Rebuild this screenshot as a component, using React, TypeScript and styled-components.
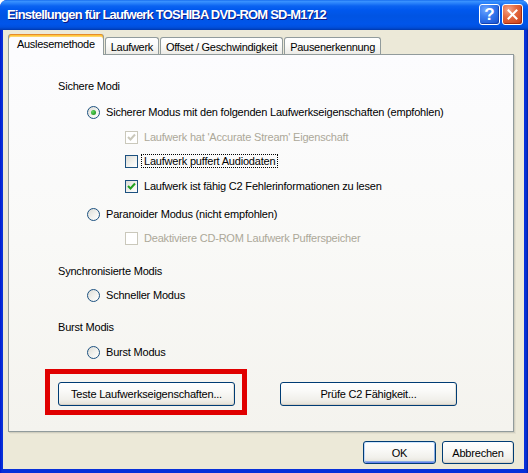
import React from "react";
import styled, { createGlobalStyle, css } from "styled-components";

const UI = `"Liberation Sans", Arial, sans-serif`;

const Global = createGlobalStyle`
  html, body { margin: 0; padding: 0; background: #ffffff; }
  body { width: 528px; height: 473px; overflow: hidden; }
  * { box-sizing: border-box; }
`;

const Window = styled.div`
  width: 528px;
  height: 473px;
  display: flex;
  flex-direction: column;
  border-radius: 7px 7px 0 0;
  overflow: hidden;
  background: linear-gradient(90deg, #0019cf 0px, #0831d9 2px, #0831d9 calc(100% - 2px), #001ea0 100%);
  font-family: ${UI};
  font-size: 11px;
  letter-spacing: -0.2px;
  color: #000;
`;

const TitleBar = styled.div`
  height: 30px;
  flex: none;
  display: flex;
  align-items: center;
  gap: 2px;
  padding: 0 5px 1px 7px;
  background: linear-gradient(
    180deg,
    #0a5fe9 0px,
    #3d95ff 1px,
    #2a83fb 3px,
    #0b63f1 6px,
    #0058ee 10px,
    #0054e3 16px,
    #0055ea 24px,
    #0050df 27px,
    #0043c4 29px,
    #0036a8 30px
  );
`;

const Title = styled.div`
  flex: 1;
  color: #ffffff;
  font-family: ${UI};
  font-weight: bold;
  font-size: 13px;
  letter-spacing: -0.8px;
  text-shadow: 1px 1px 0 #0a1883;
  white-space: nowrap;
`;

const CaptionButton = styled.div<{ $kind: "help" | "close" }>`
  width: 21px;
  height: 21px;
  border: 1px solid #ffffff;
  border-radius: 3px;
  display: flex;
  align-items: center;
  justify-content: center;
  color: #fff;
  font-family: ${UI};
  font-weight: bold;
  font-size: 17px;
  letter-spacing: 0;
  ${(p) =>
    p.$kind === "help"
      ? css`
          background: radial-gradient(circle at 30% 25%, #6ea6ff 0%, #3b7ff2 35%, #225fdc 75%, #1a4fc4 100%);
          box-shadow: inset -1px -1px 0 #1341b3;
        `
      : css`
          background: radial-gradient(circle at 30% 25%, #f4a48a 0%, #e4693f 40%, #d14a22 80%, #b8391a 100%);
          box-shadow: inset -1px -1px 0 #a52c12;
        `}
`;

const Body = styled.div`
  flex: 1;
  display: flex;
  flex-direction: column;
  margin: 0 4px 4px 3px;
  padding: 4px 10px 5px 5px;
  background: #ece9d8;
`;

const TabStrip = styled.div`
  display: flex;
  align-items: flex-end;
  height: 21px;
  margin-bottom: -1px;
  position: relative;
  z-index: 1;
  gap: 1px;
  letter-spacing: -0.3px;
`;

const Tab = styled.div<{ $active?: boolean }>`
  display: flex;
  align-items: center;
  white-space: nowrap;
  border: 1px solid #919b9c;
  border-bottom: none;
  border-radius: 3px 3px 0 0;
  ${(p) =>
    p.$active
      ? css`
          height: 21px;
          padding: 0 8px 1px 8px;
          background: #fcfcfe;
          border-top: none;
          box-shadow: inset 0 1px 0 #e68b2c, inset 0 2px 0 #ffc73c, inset 0 3px 0 #ffd66b;
        `
      : css`
          height: 17px;
          margin-bottom: 1px;
          padding: 1px 5px 0 5px;
          background: linear-gradient(180deg, #ffffff 0%, #fcfcfb 40%, #ecebe6 100%);
        `}
`;

const Panel = styled.div`
  flex: 1;
  display: flex;
  flex-direction: column;
  border: 1px solid #919b9c;
  background: linear-gradient(180deg, #fcfcfe 0%, #f9f9f7 50%, #f4f3ee 100%);
  box-shadow: 1px 1px 0 #d0cebf, 2px 2px 0 #e3e0d0;
  padding-top: 23px;
`;

const Line = styled.div<{ $level: number; $gap: number; $disabled?: boolean }>`
  display: flex;
  align-items: center;
  height: 16px;
  margin-top: ${(p) => p.$gap}px;
  padding-left: ${(p) => [49, 78, 116][p.$level]}px;
  color: ${(p) => (p.$disabled ? "#aca899" : "#000")};
  white-space: nowrap;
`;

const RadioBox = styled.span<{ $checked?: boolean }>`
  flex: none;
  width: 13px;
  height: 13px;
  margin-right: 6px;
  border-radius: 50%;
  border: 1px solid #1c5180;
  background: linear-gradient(135deg, #dcdcd7 0%, #f2f2ee 55%, #ffffff 100%);
  display: flex;
  align-items: center;
  justify-content: center;
  &::after {
    content: "";
    display: ${(p) => (p.$checked ? "block" : "none")};
    width: 5px;
    height: 5px;
    border-radius: 50%;
    background: radial-gradient(circle at 35% 35%, #63d863 0%, #2fa52f 60%, #1f8a1f 100%);
  }
`;

const CheckBox = styled.span<{ $disabled?: boolean }>`
  flex: none;
  width: 13px;
  height: 13px;
  margin-right: 6px;
  border: 1px solid ${(p) => (p.$disabled ? "#cac8bb" : "#1c5180")};
  background: ${(p) =>
    p.$disabled ? "#ffffff" : "linear-gradient(135deg, #dcdcd7 0%, #f2f2ee 55%, #ffffff 100%)"};
  display: flex;
  align-items: center;
  justify-content: center;
`;

const FocusText = styled.span`
  border: 1px dotted #000;
  margin-left: -3px;
  padding: 0 2px;
  line-height: 12px;
`;

const ButtonRow = styled.div`
  display: flex;
  gap: 45px;
  margin-top: 22px;
  padding-left: 49px;
`;

const Marked = styled.div`
  position: relative;
  display: flex;
`;

const RedFrame = styled.div`
  position: absolute;
  top: -13px;
  left: -13px;
  right: -12px;
  bottom: -9px;
  border: 5px solid #e00000;
  pointer-events: none;
`;

const XPButton = styled.div<{ $w: number; $h: number; $default?: boolean }>`
  width: ${(p) => p.$w}px;
  height: ${(p) => p.$h}px;
  display: flex;
  align-items: center;
  justify-content: center;
  font-family: ${UI};
  font-size: 11px;
  color: #000;
  border: 1px solid #003c74;
  border-radius: 3px;
  background: linear-gradient(180deg, #ffffff 0%, #fafaf8 35%, #f1f0eb 75%, #e3e0d6 100%);
  box-shadow: inset 0 -1px 0 #d6d0c5, inset -1px 0 0 #e3e0d6;
  ${(p) =>
    p.$default &&
    css`
      box-shadow: inset 0 1px 0 #cee7ff, inset 1px 0 0 #bcd4f6, inset -1px 0 0 #89ade4,
        inset 0 -1px 0 #6982ee, inset 0 -2px 0 #89ade4;
    `}
`;

const Footer = styled.div`
  display: flex;
  justify-content: flex-end;
  gap: 6px;
  margin-top: 9px;
`;

const Check = ({ color }: { color: string }) => (
  <svg width="9" height="9" viewBox="0 0 9 9">
    <path d="M1 4 L3.5 6.5 L8 1.5" fill="none" stroke={color} strokeWidth="2" />
  </svg>
);

const Close = () => (
  <svg width="11" height="11" viewBox="0 0 11 11">
    <path d="M1.5 1.5 L9.5 9.5 M9.5 1.5 L1.5 9.5" stroke="#fff" strokeWidth="2" strokeLinecap="square" />
  </svg>
);

export default function App() {
  return (
    <>
      <Global />
      <Window>
        <TitleBar>
          <Title>Einstellungen für Laufwerk TOSHIBA DVD-ROM SD-M1712</Title>
          <CaptionButton $kind="help">?</CaptionButton>
          <CaptionButton $kind="close">
            <Close />
          </CaptionButton>
        </TitleBar>
        <Body>
          <TabStrip>
            <Tab $active>Auslesemethode</Tab>
            <Tab>Laufwerk</Tab>
            <Tab>Offset / Geschwindigkeit</Tab>
            <Tab>Pausenerkennung</Tab>
          </TabStrip>
          <Panel>
            <Line $level={0} $gap={0}>Sichere Modi</Line>
            <Line $level={1} $gap={10}>
              <RadioBox $checked />
              Sicherer Modus mit den folgenden Laufwerkseigenschaften (empfohlen)
            </Line>
            <Line $level={2} $gap={9} $disabled>
              <CheckBox $disabled>
                <Check color="#cac8bb" />
              </CheckBox>
              Laufwerk hat 'Accurate Stream' Eigenschaft
            </Line>
            <Line $level={2} $gap={8}>
              <CheckBox />
              <FocusText>Laufwerk puffert Audiodaten</FocusText>
            </Line>
            <Line $level={2} $gap={9}>
              <CheckBox>
                <Check color="#21a121" />
              </CheckBox>
              Laufwerk ist fähig C2 Fehlerinformationen zu lesen
            </Line>
            <Line $level={1} $gap={12}>
              <RadioBox />
              Paranoider Modus (nicht empfohlen)
            </Line>
            <Line $level={2} $gap={8} $disabled>
              <CheckBox $disabled />
              Deaktiviere CD-ROM Laufwerk Pufferspeicher
            </Line>
            <Line $level={0} $gap={17}>Synchronisierte Modis</Line>
            <Line $level={1} $gap={8}>
              <RadioBox />
              Schneller Modus
            </Line>
            <Line $level={0} $gap={16}>Burst Modis</Line>
            <Line $level={1} $gap={9}>
              <RadioBox />
              Burst Modus
            </Line>
            <ButtonRow>
              <Marked>
                <XPButton $w={177} $h={24}>Teste Laufwerkseigenschaften...</XPButton>
                <RedFrame />
              </Marked>
              <XPButton $w={177} $h={24}>Prüfe C2 Fähigkeit...</XPButton>
            </ButtonRow>
          </Panel>
          <Footer>
            <XPButton $w={73} $h={23} $default>OK</XPButton>
            <XPButton $w={72} $h={23}>Abbrechen</XPButton>
          </Footer>
        </Body>
      </Window>
    </>
  );
}
